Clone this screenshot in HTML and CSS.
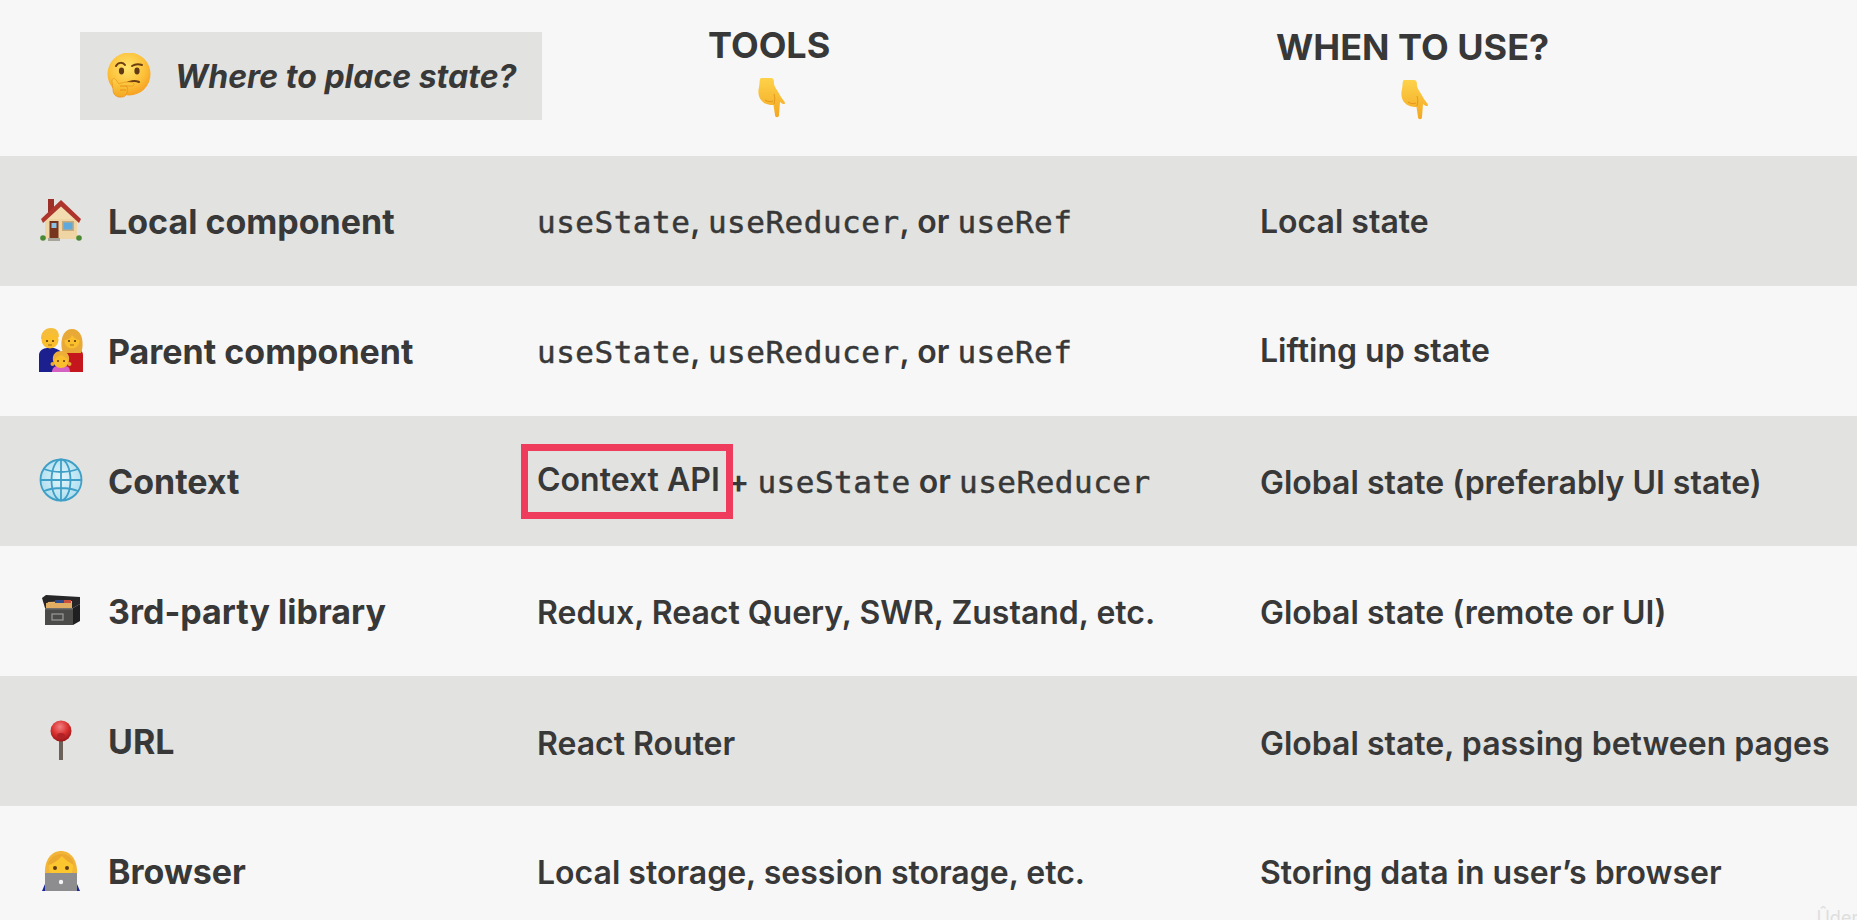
FILE: index.html
```html
<!DOCTYPE html>
<html lang="en">
<head>
<meta charset="utf-8">
<title>Where to place state?</title>
<link rel="stylesheet" href="styles.css">
</head>
<body>
<svg class="defs" width="0" height="0" aria-hidden="true">
  <defs>
    <radialGradient id="face" cx="45%" cy="35%" r="70%"><stop offset="0" stop-color="#ffe36b"/><stop offset=".6" stop-color="#fcc13a"/><stop offset="1" stop-color="#f59a1c"/></radialGradient>
    <linearGradient id="hand" x1="0" y1="0" x2="0" y2="1"><stop offset="0" stop-color="#fdd24a"/><stop offset="1" stop-color="#f4a722"/></linearGradient>
    <radialGradient id="ball" cx="45%" cy="30%" r="70%"><stop offset="0" stop-color="#f28080"/><stop offset=".55" stop-color="#d9302f"/><stop offset="1" stop-color="#9c1518"/></radialGradient>
    <radialGradient id="glob" cx="50%" cy="45%" r="60%"><stop offset="0" stop-color="#e4f5fb"/><stop offset="1" stop-color="#a9dcee"/></radialGradient>
    <symbol id="pointer" viewBox="0 0 28 40">
      <path d="M3 0H13C16 0 16 3 16 6 17 10 20 13 23 19 25 22 27 24 27 25 27 27 24 26 22 24L21 37C21 40 17 40 17 37L15.500 27C11 27 6 26 3 22 0 18 0 13 1 9 2 5 1 1 3 0z" fill="url(#hand)"/>
      <path d="M16 26C17 22 17 19 16 16M7 22C10 24 13 24 15 23" fill="none" stroke="#dd8e16" stroke-width=".8"/>
    </symbol>
  </defs>
</svg>
<main class="slide">
  <header class="head">
    <div class="question">
      <svg class="q-icon" viewBox="0 0 44 46" aria-hidden="true">
        <circle cx="22" cy="21" r="21.500" fill="url(#face)"/>
        <path d="M9 13c2-4 7-4 9-1M25 13c3-2 7-2 10-1" fill="none" stroke="#6b3f12" stroke-width="2" stroke-linecap="round"/>
        <ellipse cx="14.500" cy="18" rx="2.600" ry="3.400" fill="#5f3a14"/>
        <ellipse cx="30" cy="18" rx="2.600" ry="3.400" fill="#5f3a14"/>
        <path d="M19 31c3-3 9-4 13-2" fill="none" stroke="#6b3f12" stroke-width="2" stroke-linecap="round"/>
        <path d="M5 28c0-3 3-3 4-1l3 4c4-2 11-3 14-1 2 1 1 3-1 3l-6 0c2 1 2 3 1 4 1 2 0 3-1 4 0 2-2 3-4 3-6 1-9-3-9-7 0-3-1-6-1-9z" fill="url(#hand)" stroke="#e58a17" stroke-width=".6"/>
        <path d="M13 33l7 0M13 37l6 0" stroke="#e58a17" stroke-width=".9" fill="none"/>
      </svg>
      <em class="q-text">Where to place state?</em>
    </div>
    <div class="col-title col-title-tools">
      <h2 class="title">TOOLS</h2>
      <svg class="pointer" aria-hidden="true"><use href="#pointer"/></svg>
    </div>
    <div class="col-title col-title-when">
      <h2 class="title">WHEN TO USE?</h2>
      <svg class="pointer" aria-hidden="true"><use href="#pointer"/></svg>
    </div>
  </header>

  <section class="row alt">
    <div class="label">
      <svg class="icon" viewBox="0 0 44 44" aria-hidden="true">
        <rect x="9" y="1" width="6" height="13" fill="#9c2f27"/>
        <path d="M6 19h32v22H6z" fill="#efd5a3"/>
        <path d="M22 8 8 21h28z" fill="#f2dcb0"/>
        <path d="M22 2 2 21l2 4L22 8.500 40 25l2-4z" fill="#ad352c"/>
        <rect x="10.500" y="23" width="9" height="17" fill="#77351f"/>
        <rect x="12.500" y="25" width="5" height="5" fill="#8cc2e4"/>
        <rect x="23" y="23" width="12" height="10" fill="#c9a978"/>
        <rect x="24.500" y="24.500" width="9" height="7" fill="#5fa9dd"/>
        <circle cx="4" cy="40" r="2.800" fill="#4b8a34"/><circle cx="40" cy="40" r="2.800" fill="#4b8a34"/>
        <rect x="9" y="40" width="12" height="3" fill="#a9a49a"/>
      </svg>
      <span>Local component</span>
    </div>
    <div class="tools"><code>useState</code>, <code>useReducer</code>, or <code>useRef</code></div>
    <div class="when">Local state</div>
  </section>

  <section class="row">
    <div class="label">
      <svg class="icon" viewBox="0 0 44 44" aria-hidden="true">
        <path d="M0 44V27c0-4 4-7 8-7h7c4 1 7 3 8 6v18z" fill="#1c1f8e"/>
        <path d="M22 44V26c1-3 5-6 8-6h6c4 1 8 3 8 7v17z" fill="#c4161c"/>
        <path d="M23 22c-2-10 1-21 10-21s12 11 10 21l-1 3H25z" fill="#e8a937"/>
        <circle cx="33" cy="13" r="7.500" fill="#fbbf2d"/>
        <path d="M25 12c4 0 7-2 8-5 2 3 5 5 8 5 0-6-3-9-8-9s-8 3-8 9z" fill="#e8a937"/>
        <circle cx="11" cy="12" r="8.500" fill="#fbbf2d"/>
        <path d="M2 11C2 4 6 0 12 0c5 0 8 3 8 9-4 0-7-2-8-4-2 3-5 5-10 6z" fill="#f5bd3a"/>
        <circle cx="8" cy="13" r="1.100" fill="#5f3a14"/><circle cx="14" cy="13" r="1.100" fill="#5f3a14"/>
        <circle cx="30" cy="13" r="1.100" fill="#5f3a14"/><circle cx="36" cy="13" r="1.100" fill="#5f3a14"/>
        <path d="M9 17h4M31 17h4" stroke="#8a5316" stroke-width=".8"/>
        <path d="M13 44c0-4 3-6 5-6h8c3 0 5 2 5 6z" fill="#d65fc2"/>
        <circle cx="13.500" cy="36" r="2" fill="#e8a937"/><circle cx="30.500" cy="36" r="2" fill="#e8a937"/>
        <circle cx="22" cy="32" r="8" fill="#fbbf2d"/>
        <path d="M14 33c-1-7 3-10 8-10s9 3 8 10c-2-3-6-5-8-6-2 1-6 3-8 6z" fill="#ecb03a"/>
        <circle cx="19" cy="33" r="1" fill="#5f3a14"/><circle cx="25" cy="33" r="1" fill="#5f3a14"/>
      </svg>
      <span>Parent component</span>
    </div>
    <div class="tools"><code>useState</code>, <code>useReducer</code>, or <code>useRef</code></div>
    <div class="when nudge-up">Lifting up state</div>
  </section>

  <section class="row alt">
    <div class="label">
      <svg class="icon" viewBox="0 0 44 44" aria-hidden="true">
        <circle cx="22" cy="22" r="20.500" fill="url(#glob)"/>
        <g fill="none" stroke="#3f9fc6" stroke-width="1.800">
          <circle cx="22" cy="22" r="20.500"/>
          <ellipse cx="22" cy="22" rx="9.500" ry="20.500"/>
          <path d="M22 1.500v41M1.500 22h41M5 11c10 4 24 4 34 0M5 33c10-4 24-4 34 0"/>
        </g>
      </svg>
      <span>Context</span>
    </div>
    <div class="tools"><span class="hl">Context API</span> + <code>useState</code> or <code>useReducer</code></div>
    <div class="when nudge-1">Global state (preferably UI state)</div>
  </section>

  <section class="row">
    <div class="label">
      <svg class="icon icon-box" viewBox="0 0 38 30" aria-hidden="true">
        <path d="M0 3 4 0 38 2V9L31 13H3z" fill="#262628"/>
        <path d="M4 11 6 7 30 6V13H4z" fill="#e5b46c"/>
        <path d="M13 5H22V9H13z" fill="#2f4a8a"/><path d="M22 5H29V9H22z" fill="#c8503c"/>
        <path d="M4 8H30V13H4z" fill="#e1ad62"/>
        <path d="M31 13 38 9V26L31 30z" fill="#1f1f21"/>
        <path d="M3 13H31V30H3z" fill="#4b4b4a"/>
        <path d="M3 13H31V14.500H3z" fill="#6d6d6b"/>
        <rect x="10" y="19" width="11" height="6" fill="none" stroke="#9c9c9a" stroke-width="1.200"/>
      </svg>
      <span>3rd-party library</span>
    </div>
    <div class="tools nudge-1">Redux, React Query, SWR, Zustand, etc.</div>
    <div class="when nudge-1">Global state (remote or UI)</div>
  </section>

  <section class="row alt">
    <div class="label">
      <svg class="icon icon-pin" viewBox="0 0 22 40" aria-hidden="true">
        <rect x="9" y="18" width="4" height="22" fill="#6c625a"/>
        <circle cx="11" cy="11" r="10.500" fill="url(#ball)"/>
        <ellipse cx="11" cy="16" rx="4" ry="3" fill="#b12227"/>
      </svg>
      <span>URL</span>
    </div>
    <div class="tools nudge-2">React Router</div>
    <div class="when nudge-2">Global state, passing between pages</div>
  </section>

  <section class="row">
    <div class="label">
      <svg class="icon icon-woman" viewBox="0 0 38 40" aria-hidden="true">
        <path d="M0 40l3-7h32l3 7z" fill="#1b2497"/>
        <path d="M3 24C2 8 10 0 19 0s17 8 16 24z" fill="#f2b53a"/>
        <circle cx="19" cy="16" r="12" fill="#fcc62f"/>
        <path d="M6 14C10 13 16 10 20 5c3 4 8 7 12 9-1-7-6-11-13-11S7 8 6 14z" fill="#eca92f"/>
        <circle cx="13" cy="17" r="2" fill="#5f3a14"/><circle cx="25" cy="17" r="2" fill="#5f3a14"/>
        <rect x="3" y="22" width="32" height="18" fill="#8d8d8f"/>
        <circle cx="19" cy="31" r="2.200" fill="#f4f4f4"/>
      </svg>
      <span>Browser</span>
    </div>
    <div class="tools nudge-1">Local storage, session storage, etc.</div>
    <div class="when nudge-1">Storing data in user’s browser</div>
  </section>
  <div class="mark">Ûdemy</div>
</main>
</body>
</html>
```
FILE: styles.css
```css
* { box-sizing: border-box; }
html, body { margin: 0; height: 100%; }
body {
  background: #f7f7f7;
  color: #383838;
  font-family: Inter, "Noto Sans", sans-serif;
  overflow: hidden;
}
.defs { position: absolute; }
.slide { position: relative; height: 920px; overflow: hidden; }

.head {
  height: 156px;
  display: grid;
  grid-template-columns: 708px 568px 1fr;
  align-items: start;
}
.question {
  margin: 32px 0 0 80px;
  width: 462px;
  height: 88px;
  background: #e2e2e0;
  display: flex;
  align-items: center;
  padding-left: 27px;
  gap: 24px;
}
.q-icon { width: 44px; height: 46px; flex: none; }
.q-text { font-size: 32px; font-weight: 700; font-style: italic; white-space: nowrap; }

.col-title { padding-top: 24px; }
.col-title-when { padding-top: 26px; }
.title { margin: 0; font-size: 36px; line-height: 42px; font-weight: 700; white-space: nowrap; }
.pointer { display: block; width: 28px; height: 40px; margin-top: 12px; }
.col-title-tools .pointer { margin-left: 50px; }
.col-title-when .pointer { margin-left: 125px; }

.row {
  height: 130px;
  display: grid;
  grid-template-columns: 537px 723px 1fr;
  align-items: center;
}
.alt { background: #e2e2e0; }
.label {
  display: grid;
  grid-template-columns: 44px 1fr;
  column-gap: 25px;
  padding-left: 39px;
  align-items: center;
  font-size: 34px;
  font-weight: 700;
  white-space: nowrap;
}
.icon { width: 44px; height: 44px; justify-self: center; margin-top: -3px; }
.icon-box { width: 38px; height: 30px; }
.icon-pin { width: 22px; height: 40px; }
.icon-woman { width: 38px; height: 40px; margin-top: -1px; }

.tools, .when { font-size: 32px; font-weight: 600; white-space: nowrap; }
.nudge-up { margin-top: -2px; }
.nudge-1 { margin-top: 2px; }
.nudge-2 { margin-top: 5px; }
code {
  font-family: "DejaVu Sans Mono", "Liberation Mono", monospace;
  font-size: 31px;
  font-weight: 400;
  letter-spacing: .5px;
  -webkit-text-stroke: .5px #383838;
}
.hl { position: relative; top: -2px; }
.hl::after {
  content: "";
  position: absolute;
  left: -16px;
  right: -13px;
  top: -16px;
  bottom: -20px;
  border: 7px solid #ef3b5c;
}
.mark { position: absolute; right: -20px; bottom: -8px; font-size: 18px; color: #dedede; }
```
